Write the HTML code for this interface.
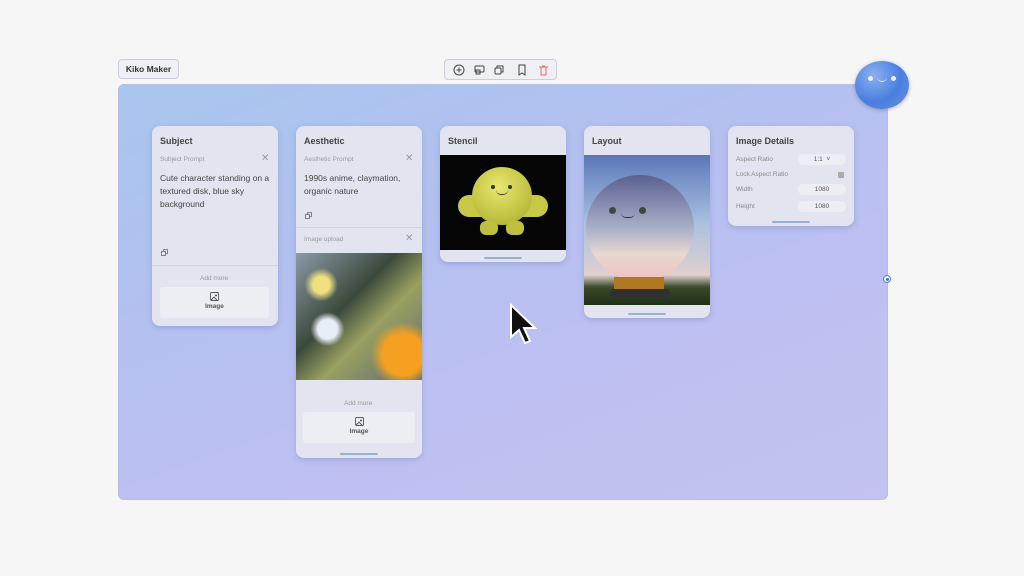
<!DOCTYPE html>
<html><head><meta charset="utf-8"><style>
*{box-sizing:border-box;margin:0;padding:0}
body{width:1024px;height:576px;background:#f6f6f6;font-family:"Liberation Sans",sans-serif;position:relative;overflow:hidden;color:#333}
.abs{position:absolute}
.canvas{left:118px;top:84px;width:770px;height:416px;border-radius:6px;background:linear-gradient(160deg,#a8c6ee 0%,#b3c0f0 35%,#bcc0f2 60%,#c3c2f0 100%);border:1px solid #b8bce6}
.card{position:absolute;background:#e2e5ef;border-radius:8px;box-shadow:0 2px 6px rgba(80,90,150,.25);overflow:hidden}
.title{position:absolute;left:8px;top:10px;font-size:9px;font-weight:bold;color:#444}
.lbl{position:absolute;font-size:6.5px;color:#999}
.x{position:absolute;font-size:10px;color:#999}
.txt{position:absolute;font-size:8.5px;line-height:13px;color:#444}
.btn{position:absolute;background:#eceef4;border-radius:3px;text-align:center;font-size:6.5px;color:#555;font-weight:bold}
.btn svg{display:block;margin:5px auto 2px}
.bar{position:absolute;height:2px;width:38px;border-radius:1px;background:#9ab0dc}
.pill{position:absolute;left:70px;width:48px;height:11px;border-radius:6px;background:#eceef4;font-size:6.5px;color:#555;text-align:center;line-height:11px}
</style></head><body>
<div class="abs" style="left:118px;top:59px;width:61px;height:20px;border:1px solid #ccd;border-radius:4px;background:#eef0f4;font-size:8.5px;font-weight:bold;line-height:18px;text-align:center;color:#333">Kiko Maker</div>
<div class="abs" style="left:444px;top:59px;width:113px;height:21px;border:1px solid #ccd;border-radius:4px;background:#eef0f4">
<svg width="113" height="21" fill="none" stroke="#444" stroke-width="1">
<circle cx="14" cy="10" r="5"/><path d="M14 7.5v5M11.5 10h5"/>
<rect x="30" y="6" width="9" height="6" rx="1"/><rect x="31" y="10" width="4" height="4"/>
<rect x="50" y="8" width="6" height="6" rx="1"/><path d="M52 8V6h6v6h-2"/>
<path d="M74 5h6v10l-3-2-3 2z"/>
<path d="M94 7h9M96 7v8h5V7M97 6h3" stroke="#e66"/>
</svg></div>
<div class="abs canvas"></div>
<div class="abs" style="left:855px;top:61px;width:54px;height:48px;border-radius:50%;background:radial-gradient(circle at 35% 30%,#8ab0f0,#4a7fe0 55%,#6a90d8);box-shadow:0 1px 4px rgba(0,0,0,.25)">
<div class="abs" style="left:13px;top:15px;width:5px;height:5px;border-radius:50%;background:#eef"></div>
<div class="abs" style="left:36px;top:15px;width:5px;height:5px;border-radius:50%;background:#eef"></div>
<div class="abs" style="left:22px;top:16px;width:10px;height:5px;border-bottom:1.5px solid #eef;border-radius:0 0 6px 6px"></div></div>
<div class="abs" style="left:883px;top:275px;width:8px;height:8px;border-radius:50%;background:#fff;border:1px solid #4a7fe0"><div style="margin:1.5px;width:3px;height:3px;border-radius:50%;background:#3a6fe0"></div></div>

<div class="card" style="left:152px;top:126px;width:126px;height:200px">
<div class="title">Subject</div>
<div class="lbl" style="left:8px;top:30px">Subject Prompt</div><div class="x" style="left:109px;top:27px">✕</div>
<div class="txt" style="left:8px;top:46px;width:112px">Cute character standing on a textured disk, blue sky background</div>
<svg class="abs" style="left:9px;top:123px" width="7" height="7" fill="none" stroke="#666" stroke-width=".8"><rect x=".5" y="2.5" width="4" height="4"/><path d="M2.5 2.5V.5h4v4h-2"/></svg>
<div class="abs" style="left:0;top:139px;width:126px;height:1px;background:#d2d5e0"></div>
<div class="lbl" style="left:48px;top:149px">Add more</div>
<div class="btn" style="left:8px;top:161px;width:109px;height:31px"><svg width="9" height="9" fill="none" stroke="#555" stroke-width=".9"><rect x=".5" y=".5" width="8" height="8" rx="1"/><path d="M1 8l3-3 3 3M6 2.5v2M5 3.5h2"/></svg>Image</div>
</div>

<div class="card" style="left:296px;top:126px;width:126px;height:332px">
<div class="title">Aesthetic</div>
<div class="lbl" style="left:8px;top:30px">Aesthetic Prompt</div><div class="x" style="left:109px;top:27px">✕</div>
<div class="txt" style="left:8px;top:46px;width:115px">1990s anime, claymation, organic nature</div>
<svg class="abs" style="left:9px;top:86px" width="7" height="7" fill="none" stroke="#666" stroke-width=".8"><rect x=".5" y="2.5" width="4" height="4"/><path d="M2.5 2.5V.5h4v4h-2"/></svg>
<div class="abs" style="left:0;top:101px;width:126px;height:1px;background:#d2d5e0"></div>
<div class="lbl" style="left:8px;top:110px">Image upload</div><div class="x" style="left:109px;top:107px">✕</div>
<div class="abs" style="left:0;top:127px;width:126px;height:127px;background:radial-gradient(circle at 85% 80%,#f5a020 0 14%,transparent 22%),radial-gradient(circle at 20% 25%,#f0e080 0 6%,transparent 12%),radial-gradient(circle at 25% 60%,#e8eef8 0 8%,transparent 14%),linear-gradient(135deg,#8b9aa8,#3c4a3c 40%,#9aa060 60%,#5a6a78)"></div>
<div class="lbl" style="left:48px;top:274px">Add more</div>
<div class="btn" style="left:7px;top:286px;width:112px;height:31px"><svg width="9" height="9" fill="none" stroke="#555" stroke-width=".9"><rect x=".5" y=".5" width="8" height="8" rx="1"/><path d="M1 8l3-3 3 3M6 2.5v2M5 3.5h2"/></svg>Image</div>
<div class="bar" style="left:44px;top:327px"></div>
</div>

<div class="card" style="left:440px;top:126px;width:126px;height:136px">
<div class="title">Stencil</div>
<div class="abs" style="left:0;top:29px;width:126px;height:95px;background:#050505">
<div class="abs" style="left:18px;top:40px;width:90px;height:22px;border-radius:11px;background:#c8c848"></div>
<div class="abs" style="left:32px;top:12px;width:60px;height:58px;border-radius:50%;background:radial-gradient(circle at 45% 35%,#e8e870,#b8b838 75%,#7a7a20)"></div>
<div class="abs" style="left:40px;top:66px;width:18px;height:14px;border-radius:6px;background:#c0c040"></div>
<div class="abs" style="left:66px;top:66px;width:18px;height:14px;border-radius:6px;background:#c0c040"></div>
<div class="abs" style="left:51px;top:30px;width:4px;height:4px;border-radius:50%;background:#333"></div>
<div class="abs" style="left:68px;top:30px;width:4px;height:4px;border-radius:50%;background:#333"></div>
<div class="abs" style="left:56px;top:35px;width:12px;height:5px;border-bottom:1.5px solid #333;border-radius:0 0 6px 6px"></div>
</div>
<div class="bar" style="left:44px;top:131px"></div>
</div>

<div class="card" style="left:584px;top:126px;width:126px;height:192px">
<div class="title">Layout</div>
<div class="abs" style="left:0;top:29px;width:126px;height:150px;background:linear-gradient(#5a78b8,#aac0e0 45%,#e0d0d0 80%,#3a4a2a 88%,#203018)">
<div class="abs" style="left:2px;top:20px;width:108px;height:106px;border-radius:50%;background:linear-gradient(#5a6090,#a8b0c8 50%,#e8d8d0 75%,#f0c0c0)"></div>
<div class="abs" style="left:30px;top:122px;width:50px;height:18px;background:#b07820"></div>
<div class="abs" style="left:26px;top:134px;width:60px;height:8px;border-radius:3px;background:#303030"></div>
<div class="abs" style="left:25px;top:52px;width:7px;height:7px;border-radius:50%;background:#444"></div>
<div class="abs" style="left:55px;top:52px;width:7px;height:7px;border-radius:50%;background:#444"></div>
<div class="abs" style="left:37px;top:58px;width:14px;height:5px;border-bottom:1.5px solid #333;border-radius:0 0 8px 8px"></div>
</div>
<div class="bar" style="left:44px;top:187px"></div>
</div>

<div class="card" style="left:728px;top:126px;width:126px;height:100px">
<div class="title">Image Details</div>
<div class="lbl" style="left:8px;top:30px;color:#888">Aspect Ratio</div><div class="pill" style="top:28px">1:1 &nbsp;˅</div>
<div class="lbl" style="left:8px;top:45px;color:#888">Lock Aspect Ratio</div><div class="abs" style="left:110px;top:46px;width:6px;height:6px;background:#aaa;border-radius:1px"></div>
<div class="lbl" style="left:8px;top:60px;color:#888">Width</div><div class="pill" style="top:58px">1080</div>
<div class="lbl" style="left:8px;top:77px;color:#888">Height</div><div class="pill" style="top:75px">1080</div>
<div class="bar" style="left:44px;top:95px"></div>
</div>

<svg class="abs" style="left:508px;top:303px" width="30" height="42"><path d="M3 2v32l8-7 6 13 5-2-6-13h11z" fill="#111" stroke="#fff" stroke-width="2"/></svg>
</body></html>
